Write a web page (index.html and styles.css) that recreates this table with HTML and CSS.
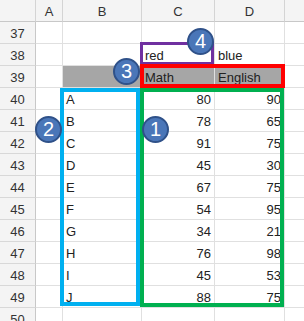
FILE: index.html
```html
<!DOCTYPE html>
<html>
<head>
<meta charset="utf-8">
<link rel="stylesheet" href="styles.css">
</head>
<body>
<div class="sheet">
  <div class="grid">
    <div class="hd corner"></div><div class="hd">A</div><div class="hd">B</div><div class="hd">C</div><div class="hd">D</div><div class="hd last"></div>

    <div class="rh">37</div><div class="c"></div><div class="c"></div><div class="c"></div><div class="c"></div><div class="c last"></div>
    <div class="rh">38</div><div class="c"></div><div class="c"></div><div class="c">red</div><div class="c">blue</div><div class="c last"></div>
    <div class="rh">39</div><div class="c"></div><div class="c fill"></div><div class="c fill">Math</div><div class="c fill">English</div><div class="c last"></div>

    <div class="rh">40</div><div class="c"></div><div class="c">A</div><div class="c num">80</div><div class="c num">90</div><div class="c last"></div>
    <div class="rh">41</div><div class="c"></div><div class="c">B</div><div class="c num">78</div><div class="c num">65</div><div class="c last"></div>
    <div class="rh">42</div><div class="c"></div><div class="c">C</div><div class="c num">91</div><div class="c num">75</div><div class="c last"></div>
    <div class="rh">43</div><div class="c"></div><div class="c">D</div><div class="c num">45</div><div class="c num">30</div><div class="c last"></div>
    <div class="rh">44</div><div class="c"></div><div class="c">E</div><div class="c num">67</div><div class="c num">75</div><div class="c last"></div>
    <div class="rh">45</div><div class="c"></div><div class="c">F</div><div class="c num">54</div><div class="c num">95</div><div class="c last"></div>
    <div class="rh">46</div><div class="c"></div><div class="c">G</div><div class="c num">34</div><div class="c num">21</div><div class="c last"></div>
    <div class="rh">47</div><div class="c"></div><div class="c">H</div><div class="c num">76</div><div class="c num">98</div><div class="c last"></div>
    <div class="rh">48</div><div class="c"></div><div class="c">I</div><div class="c num">45</div><div class="c num">53</div><div class="c last"></div>
    <div class="rh">49</div><div class="c"></div><div class="c">J</div><div class="c num">88</div><div class="c num">75</div><div class="c last"></div>
    <div class="rh">50</div><div class="c"></div><div class="c"></div><div class="c"></div><div class="c"></div><div class="c last"></div>
  </div>

  <div class="box box-purple"></div>
  <div class="box box-red"></div>
  <div class="box box-blue"></div>
  <div class="box box-green"></div>

  <div class="badge b1">1</div>
  <div class="badge b2">2</div>
  <div class="badge b3">3</div>
  <div class="badge b4">4</div>
</div>
</body>
</html>
```

FILE: styles.css
```css
html, body {
  margin: 0;
  padding: 0;
  background: #ffffff;
}

.sheet {
  position: relative;
  width: 304px;
  height: 321px;
  overflow: hidden;
  font-family: "Liberation Sans", Arial, sans-serif;
  font-size: 13px;
  color: #222222;
}

.grid {
  display: grid;
  grid-template-columns: 36px 27px 79px 73px 70px 40px;
  grid-template-rows: 22px repeat(14, 22px);
}

.hd {
  background: #f4f4f4;
  border-right: 1px solid #d4d4d4;
  border-bottom: 1px solid #c8c8c8;
  display: flex;
  align-items: center;
  justify-content: center;
  color: #333333;
  padding-top: 2px;
  box-sizing: border-box;
}

.rh {
  background: #f4f4f4;
  border-right: 1px solid #c8c8c8;
  border-bottom: 1px solid #d8d8d8;
  display: flex;
  align-items: center;
  justify-content: center;
  color: #333333;
  padding-top: 1px;
  box-sizing: border-box;
}

.c {
  border-right: 1px solid #e0e0e0;
  border-bottom: 1px solid #e0e0e0;
  display: flex;
  align-items: center;
  padding: 1px 3px 0 3px;
  box-sizing: border-box;
  white-space: nowrap;
  overflow: visible;
}

.num {
  justify-content: flex-end;
}

.fill {
  background: #a6a6a6;
}

.last {
  border-right: none;
}

.box {
  position: absolute;
  box-sizing: border-box;
}

.box-purple {
  left: 140px;
  top: 42px;
  width: 74px;
  height: 23px;
  border: 3px solid #7030a0;
}

.box-red {
  left: 140px;
  top: 64px;
  width: 145px;
  height: 24px;
  border: 4px solid #ff0000;
}

.box-blue {
  left: 60px;
  top: 88px;
  width: 80px;
  height: 218px;
  border: 4px solid #00b0f0;
}

.box-green {
  left: 140px;
  top: 88px;
  width: 144px;
  height: 219px;
  border: 4px solid #00b050;
}

.badge {
  position: absolute;
  width: 27px;
  height: 27px;
  box-sizing: border-box;
  border-radius: 50%;
  background: #4a76b8;
  border: 2px solid #2f5189;
  color: #ffffff;
  font-size: 20px;
  line-height: 23px;
  text-align: center;
}

.b1 { left: 142px; top: 116px; }
.b2 { left: 35px; top: 116px; }
.b3 { left: 113px; top: 58px; }
.b4 { left: 187px; top: 28px; }
```
